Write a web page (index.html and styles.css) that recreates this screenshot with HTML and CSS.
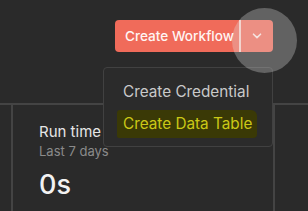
FILE: index.html
```html
<!DOCTYPE html>
<html>
<head>
<meta charset="utf-8">
<link rel="stylesheet" href="styles.css">
</head>
<body>
<div class="page">
  <div class="topbar">
    <div class="split">
      <button class="split-main">Create Workflow</button>
      <span class="split-divider"></span>
      <button class="split-toggle">
        <svg width="10" height="6" viewBox="0 0 10 6"><path d="M1.5 1.2 L5 4.6 L8.5 1.2" fill="none" stroke="#fde3de" stroke-width="1.6" stroke-linecap="round" stroke-linejoin="round"/></svg>
      </button>
      <div class="menu">
        <div class="menu-item">Create Credential</div>
        <div class="menu-item"><span class="marker">Create Data Table</span></div>
      </div>
      <div class="spot"></div>
    </div>
  </div>
  <div class="stats">
    <div class="card">
      <div class="card-title">Run time</div>
      <div class="card-sub">Last 7 days</div>
      <div class="card-value">0s</div>
    </div>
  </div>
</div>
</body>
</html>
```

FILE: styles.css
```css
html, body {
  margin: 0;
  padding: 0;
  background: #2a2a2a;
  font-family: Inter, "Noto Sans", sans-serif;
  overflow: hidden;
}
.page {
  width: 308px;
  height: 211px;
  overflow: hidden;
}
.topbar {
  display: flex;
  justify-content: flex-end;
  padding: 20px 35px 0 0;
  height: 32px;
}
.split {
  position: relative;
  display: flex;
  height: 32px;
  background: #f06b5a;
  border-radius: 4px;
}
.split-main {
  border: 0;
  background: transparent;
  color: #fff5f3;
  font-family: Inter, sans-serif;
  font-size: 13.6px;
  font-weight: 500;
  padding: 0 0 0 10px;
  width: 124px;
  text-align: left;
  height: 32px;
  border-radius: 4px 0 0 4px;
}
.split-divider {
  width: 2px;
  background: #f8cdc5;
}
.split-toggle {
  border: 0;
  background: transparent;
  width: 32px;
  height: 32px;
  padding: 0;
  display: flex;
  align-items: center;
  justify-content: center;
}
.menu {
  position: absolute;
  top: 47px;
  right: 0;
  width: 168px;
  height: 70px;
  box-sizing: content-box;
  border: 1px solid #414141;
  border-radius: 4px;
  background: #2b2b2b;
  display: flex;
  flex-direction: column;
  padding-top: 8px;
  z-index: 2;
}
.menu-item {
  flex: none;
  height: 32px;
  line-height: 32px;
  padding-left: 19px;
  font-size: 15.3px;
  color: #c9c9c9;
  white-space: nowrap;
}
.marker {
  display: inline-block;
  line-height: 26px;
  margin-left: -6px;
  padding: 1px 5px 1px 6px;
  background: #3a3906;
  color: #cbc817;
  border-radius: 3px 6px 4px 2px;
}
.spot {
  position: absolute;
  left: 117px;
  top: -12px;
  width: 65px;
  height: 65px;
  border-radius: 50%;
  background: rgba(230, 230, 230, 0.3);
  z-index: 3;
}
.stats {
  margin-top: 51px;
  border-top: 2px solid #444;
  padding-left: 11px;
}
.card {
  width: 234px;
  height: 90px;
  border-left: 2px solid #444;
  border-right: 2px solid #444;
  padding-left: 26px;
  padding-top: 17px;
}
.card-title {
  font-size: 15px;
  color: #e6e6e6;
  line-height: 20px;
}
.card-sub {
  font-size: 13px;
  color: #8a8a8a;
  line-height: 18px;
  margin-top: 0;
}
.card-value {
  font-size: 27px;
  font-weight: 500;
  color: #f2f2f2;
  line-height: 32px;
  margin-top: 9px;
}
```
